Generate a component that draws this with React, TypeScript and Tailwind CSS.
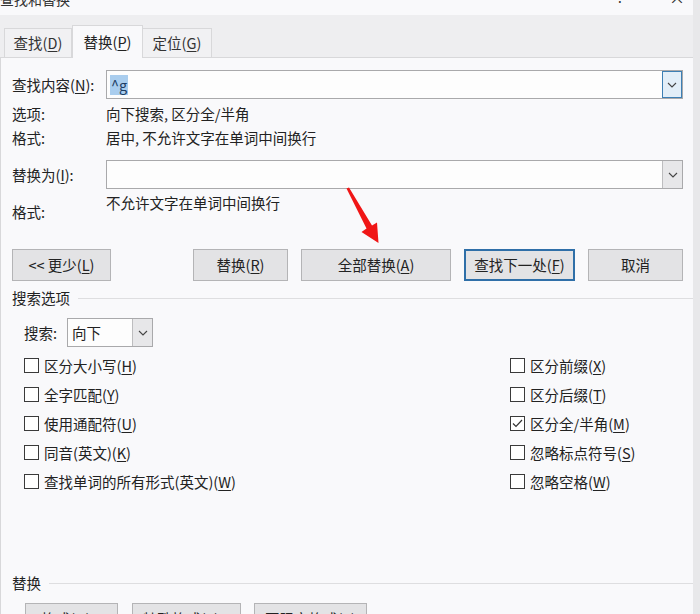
import React from "react";

const Chevron = () => (
  <svg width="10" height="6" viewBox="0 0 10 6" fill="none">
    <polyline points="1,1 5,5 9,1" stroke="#444" strokeWidth="1.1" />
  </svg>
);

const K = ({ children }: { children: React.ReactNode }) => (
  <span className="underline underline-offset-2 decoration-1">{children}</span>
);

const Btn = ({
  w,
  children,
  focus,
}: {
  w: string;
  children: React.ReactNode;
  focus?: boolean;
}) => (
  <div
    className={
      "h-[32px] flex items-center justify-center shrink-0 bg-[#e3e3e5] " +
      w +
      (focus ? " border-2 border-[#2f6fa8]" : " border border-[#b4b4b6]")
    }
  >
    {children}
  </div>
);

const Check = ({
  checked,
  children,
}: {
  checked?: boolean;
  children: React.ReactNode;
}) => (
  <div className="h-[29px] flex items-center gap-[5px]">
    <div className="w-[15px] h-[15px] border border-[#3a3a3a] bg-white flex items-center justify-center shrink-0">
      {checked && (
        <svg width="11" height="9" viewBox="0 0 11 9" fill="none">
          <polyline points="1,4.5 4,7.5 10,1" stroke="#333" strokeWidth="1.2" />
        </svg>
      )}
    </div>
    <span className="whitespace-nowrap">{children}</span>
  </div>
);

export default function App() {
  return (
    <div className="relative w-[700px] h-[614px] overflow-hidden flex bg-[#e8e8ea] text-[14.5px] text-[#222] font-['Noto_Sans_CJK_SC','Microsoft_YaHei',sans-serif] leading-[24px]">
      <div className="w-[693px] shrink-0 flex flex-col">
        {/* title bar */}
        <div className="h-[15px] bg-[#f9f9fb] flex items-start overflow-hidden shrink-0">
          <span className="-mt-[11px] leading-[20px] text-[14px] text-[#333]">查找和替换</span>
          <span className="ml-auto w-[20px] text-center -mt-[13px] leading-[20px] text-[14px] text-[#333]">?</span>
          <span className="ml-[37px] mr-[6px] w-[20px] text-center -mt-[13px] leading-[20px] text-[16px] text-[#333]">×</span>
        </div>
        {/* tab strip */}
        <div className="h-[42px] bg-[#eeeef0] flex items-end pl-[4px] shrink-0">
          <div className="h-[29px] w-[68px] flex items-center justify-center bg-[#f1f1f3] border border-b-0 border-[#d8d8da] text-[#333]">
            查找(<K>D</K>)
          </div>
          <div className="h-[33px] w-[71px] -mb-px flex items-start pt-[4px] justify-center bg-[#f9f9fb] border border-b-0 border-[#d8d8da] relative z-10">
            替换(<K>P</K>)
          </div>
          <div className="h-[29px] w-[69px] flex items-center justify-center bg-[#f1f1f3] border border-b-0 border-l-0 border-[#d8d8da] text-[#333]">
            定位(<K>G</K>)
          </div>
        </div>
        {/* panel */}
        <div className="flex-1 bg-[#f9f9fb] border-l border-t border-[#d8d8da] pl-[11px] pt-[12px] flex flex-col">
          {/* find row */}
          <div className="flex items-center h-[29px]">
            <div className="w-[94px] shrink-0">
              查找内容(<K>N</K>):
            </div>
            <div className="w-[577px] h-[29px] border border-[#a9a9ab] bg-[#fdfdfd] flex items-center">
              <span className="ml-[3px] px-[1px] leading-[20px] bg-[#a9cdee] text-[#1d3d63]">^g</span>
              <div className="ml-auto w-[20px] h-[27px] border border-[#3d7fb4] bg-[#e2eef8] flex items-center justify-center">
                <Chevron />
              </div>
            </div>
          </div>
          <div className="flex h-[24px] mt-[3px]">
            <div className="w-[94px] shrink-0">选项:</div>
            <div>向下搜索, 区分全/半角</div>
          </div>
          <div className="flex h-[24px]">
            <div className="w-[94px] shrink-0">格式:</div>
            <div>居中, 不允许文字在单词中间换行</div>
          </div>
          {/* replace row */}
          <div className="flex items-center h-[29px] mt-[10px]">
            <div className="w-[94px] shrink-0">
              替换为(<K>I</K>):
            </div>
            <div className="w-[577px] h-[29px] border border-[#a9a9ab] bg-[#fdfdfd] flex items-center">
              <div className="ml-auto w-[20px] h-[27px] border-l border-[#bdbdbf] bg-[#e7e7e9] flex items-center justify-center">
                <Chevron />
              </div>
            </div>
          </div>
          <div className="flex h-[35px]">
            <div className="w-[94px] shrink-0 pt-[11px]">格式:</div>
            <div className="pt-[2px]">不允许文字在单词中间换行</div>
          </div>
          {/* buttons */}
          <div className="flex mt-[25px]">
            <Btn w="w-[99px]">
              &lt;&lt; 更少(<K>L</K>)
            </Btn>
            <div className="ml-[82px]">
              <Btn w="w-[95px]">
                替换(<K>R</K>)
              </Btn>
            </div>
            <div className="ml-[13px]">
              <Btn w="w-[150px]">
                全部替换(<K>A</K>)
              </Btn>
            </div>
            <div className="ml-[13px]">
              <Btn w="w-[111px]" focus>
                查找下一处(<K>F</K>)
              </Btn>
            </div>
            <div className="ml-[13px]">
              <Btn w="w-[95px]">取消</Btn>
            </div>
          </div>
          {/* search options legend */}
          <div className="flex items-center h-[20px] mt-[7px] gap-[8px]">
            <span className="leading-[20px]">搜索选项</span>
            <div className="flex-1 h-px bg-[#dedee0]" />
          </div>
          <div className="flex items-center mt-[10px] pl-[12px] h-[29px]">
            <span className="w-[43px]">搜索:</span>
            <div className="w-[86px] h-[29px] border border-[#a9a9ab] bg-[#fdfdfd] flex items-center">
              <span className="ml-[4px]">向下</span>
              <div className="ml-auto w-[20px] h-[27px] border-l border-[#bdbdbf] bg-[#e7e7e9] flex items-center justify-center">
                <Chevron />
              </div>
            </div>
          </div>
          <div className="grid grid-cols-[486px_1fr] pl-[12px] mt-[4px]">
            <div className="flex flex-col">
              <Check>
                区分大小写(<K>H</K>)
              </Check>
              <Check>
                全字匹配(<K>Y</K>)
              </Check>
              <Check>
                使用通配符(<K>U</K>)
              </Check>
              <Check>
                同音(英文)(<K>K</K>)
              </Check>
              <Check>
                查找单词的所有形式(英文)(<K>W</K>)
              </Check>
            </div>
            <div className="flex flex-col">
              <Check>
                区分前缀(<K>X</K>)
              </Check>
              <Check>
                区分后缀(<K>T</K>)
              </Check>
              <Check checked>
                区分全/半角(<K>M</K>)
              </Check>
              <Check>
                忽略标点符号(<K>S</K>)
              </Check>
              <Check>
                忽略空格(<K>W</K>)
              </Check>
            </div>
          </div>
          {/* replace legend */}
          <div className="flex items-center h-[20px] mt-[77px] gap-[8px]">
            <span className="leading-[20px]">替换</span>
            <div className="flex-1 h-px bg-[#dedee0]" />
          </div>
          <div className="flex mt-[10px] pl-[13px]">
            <Btn w="w-[93px]">
              格式(<K>O</K>) ▾
            </Btn>
            <div className="ml-[14px]">
              <Btn w="w-[109px]">
                特殊格式(<K>E</K>) ▾
              </Btn>
            </div>
            <div className="ml-[13px]">
              <Btn w="w-[113px]">
                不限定格式(<K>T</K>)
              </Btn>
            </div>
          </div>
        </div>
      </div>
      {/* red annotation arrow */}
      <svg
        className="absolute inset-0 pointer-events-none"
        width="700"
        height="614"
        viewBox="0 0 700 614"
      >
        <polygon
          points="346.5,188.5 349,187.5 372,225.5 377,222.5 378.5,243 361.5,232 366.5,228.5"
          fill="#f01616"
        />
      </svg>
    </div>
  );
}
